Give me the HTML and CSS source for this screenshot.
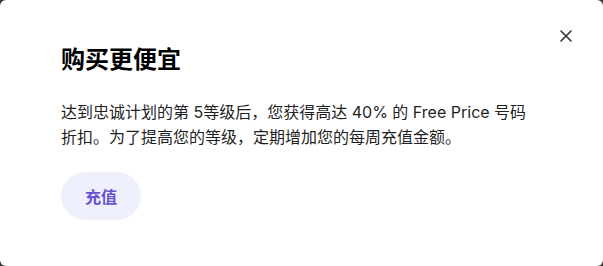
FILE: index.html
```html
<!DOCTYPE html>
<html lang="zh-CN">
<head>
<meta charset="utf-8">
<link rel="stylesheet" href="styles.css">
</head>
<body>
<div class="modal">
  <button class="close" aria-label="关闭">
    <svg width="12" height="12" viewBox="0 0 12 12"><path d="M1 1L11 11M11 1L1 11" stroke="#333" stroke-width="1.6" stroke-linecap="round"/></svg>
  </button>
  <h2 class="title">购买更便宜</h2>
  <p class="text">达到忠诚计划的第 5等级后，您获得高达 40% 的 Free Price 号码折扣。为了提高您的等级，定期增加您的每周充值金额。</p>
  <button class="cta">充值</button>
</div>
</body>
</html>
```
FILE: styles.css
```css
html, body {
  margin: 0;
  height: 100%;
  background: #3a3a3a;
}
.modal {
  position: relative;
  box-sizing: border-box;
  height: 266px;
  background: #fff;
  border-radius: 6px;
  padding: 44px 70px 0 61px;
  font-family: Inter, "Noto Sans CJK SC", sans-serif;
  color: #1a1a1a;
}
.close {
  position: absolute;
  top: 30px;
  right: 31px;
  width: 12px;
  height: 12px;
  padding: 0;
  border: 0;
  background: none;
  display: flex;
}
.title {
  margin: 0;
  font-size: 24px;
  line-height: 32px;
  font-weight: 700;
  color: #000;
}
.text {
  margin: 24px 0 0;
  font-size: 16px;
  line-height: 25px;
  color: #1f1f1f;
}
.cta {
  margin-top: 22px;
  height: 48px;
  padding: 0 24px;
  border: 0;
  border-radius: 24px;
  background: #eef0fd;
  color: #6650d0;
  font-family: Inter, "Noto Sans CJK SC", sans-serif;
  font-size: 16px;
  font-weight: 700;
}
```
